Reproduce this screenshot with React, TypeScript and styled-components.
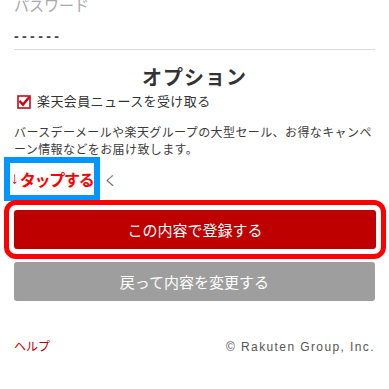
import React from "react";
import styled, { createGlobalStyle } from "styled-components";

const Global = createGlobalStyle`
  html, body { margin: 0; padding: 0; background: #fff; overflow: hidden; }
  body { font-family: "Liberation Sans", "Noto Sans CJK JP", sans-serif; color: #333; }
`;

const Page = styled.div`
  padding: 0 14px;
  margin-top: -4px;
  display: flex;
  flex-direction: column;
`;

const FieldLabel = styled.div`
  font-size: 15px;
  line-height: 20px;
  color: #aaa;
`;

const FieldValue = styled.div`
  margin-top: 10px;
  padding-bottom: 3px;
  border-bottom: 1px solid #ddd;
  font-size: 14px;
  line-height: 20px;
  font-weight: bold;
  letter-spacing: 3.4px;
  color: #444;
`;

const Heading = styled.h2`
  margin: 14px 0 0;
  text-align: center;
  font-size: 20px;
  line-height: 28px;
  font-weight: bold;
  letter-spacing: 1px;
  color: #333;
`;

const CheckRow = styled.label`
  display: flex;
  align-items: center;
  gap: 6px;
  margin-top: 0;
  padding-left: 3px;
  font-size: 13px;
  line-height: 20px;
  letter-spacing: 0.4px;
  color: #333;
`;

const Box = styled.svg`
  width: 14px;
  height: 14px;
  flex: none;
`;

const Note = styled.p`
  margin: 13px 0 0;
  font-size: 12px;
  line-height: 17px;
  letter-spacing: 0.4px;
  color: #3c3c3c;
`;

const TapRow = styled.div`
  display: flex;
  align-items: center;
  gap: 4px;
  margin: -2px 0 0 -10px;
`;

const TapBadge = styled.div`
  width: 84px;
  height: 32px;
  border: 6px solid #0096ff;
  background: #fff;
  display: flex;
  align-items: center;
  justify-content: center;
  white-space: nowrap;
  color: #ff0000;
  font-size: 16px;
  font-weight: bold;
  letter-spacing: -1.2px;
`;

const Arrow = styled.span`
  font-family: "Liberation Sans", "DejaVu Sans", sans-serif;
  font-weight: normal;
  font-size: 17px;
  margin-right: 2px;
`;

const Hidden = styled.span`
  font-size: 13px;
  color: #666;
`;

const Highlight = styled.div`
  margin: -1px -11px 0 -10px;
  border: 5px solid #ff0000;
  border-radius: 12px;
  padding: 5px;
`;

const Button = styled.button<{ $variant: "primary" | "secondary" }>`
  display: flex;
  align-items: center;
  justify-content: center;
  width: 100%;
  height: 39px;
  border: none;
  border-radius: 3px;
  font-family: "Liberation Sans", "Noto Sans CJK JP", sans-serif;
  font-size: 15px;
  color: #fff;
  background: ${(p) => (p.$variant === "primary" ? "#bf0000" : "#9e9e9e")};
  margin-top: ${(p) => (p.$variant === "primary" ? "0" : "3px")};
`;

const Footer = styled.div`
  display: flex;
  justify-content: space-between;
  align-items: center;
  margin-top: 38px;
  font-size: 12px;
  line-height: 16px;
`;

const HelpLink = styled.a`
  color: #bf0000;
  text-decoration: none;
`;

const Copy = styled.span`
  color: #555;
  letter-spacing: 1.4px;
`;

export default function App() {
  return (
    <>
      <Global />
      <Page>
        <FieldLabel>パスワード</FieldLabel>
        <FieldValue>------</FieldValue>
        <Heading>オプション</Heading>
        <CheckRow>
          <Box viewBox="0 0 14 14">
            <rect x="1" y="1" width="12" height="12" fill="#fff" stroke="#c0101a" strokeWidth="1.6" />
            <path d="M3.3 6.8 L6 9.6 L11.8 2.6" fill="none" stroke="#d0021b" strokeWidth="2.4" strokeLinecap="square" />
          </Box>
          楽天会員ニュースを受け取る
        </CheckRow>
        <Note>
          バースデーメールや楽天グループの大型セール、お得なキャンペーン情報などをお届け致します。
        </Note>
        <TapRow>
          <TapBadge>
            <Arrow>↓</Arrow>タップする
          </TapBadge>
          <Hidden>く</Hidden>
        </TapRow>
        <Highlight>
          <Button $variant="primary">この内容で登録する</Button>
        </Highlight>
        <Button $variant="secondary">戻って内容を変更する</Button>
        <Footer>
          <HelpLink href="#">ヘルプ</HelpLink>
          <Copy>© Rakuten Group, Inc.</Copy>
        </Footer>
      </Page>
    </>
  );
}
